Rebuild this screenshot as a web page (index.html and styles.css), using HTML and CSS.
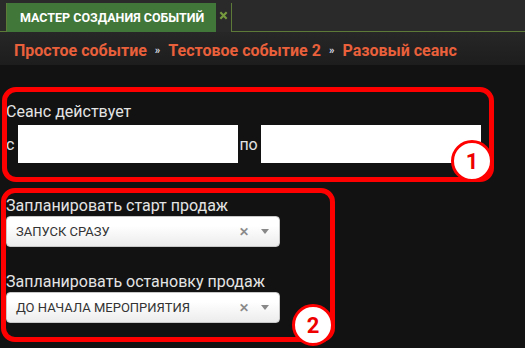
FILE: index.html
```html
<!DOCTYPE html>
<html lang="ru">
<head>
  <meta charset="UTF-8"/>
  <title>Мастер создания событий</title>
  <link rel="stylesheet" href="styles.css">
</head>
<body>
  <div class="tabbar">
    <div class="tab">Мастер создания событий</div>
    <div class="tab-close">
      <svg viewBox="0 0 10 10"><path d="M1.5 1.5l7 7M8.5 1.5l-7 7"/></svg>
    </div>
  </div>

  <div class="crumbs">
    <a href="#">Простое событие</a><span class="sep">»</span>
    <a href="#">Тестовое событие 2</a><span class="sep">»</span>
    <a href="#">Разовый сеанс</a>
  </div>

  <main class="wizard">
    <section class="group group-period">
      <div class="label">Сеанс действует</div>
      <div class="range">
        <span class="from">с</span>
        <input class="date" type="text"/>
        <span class="to">по</span>
        <input class="date" type="text"/>
      </div>
      <span class="mark">1</span>
    </section>

    <section class="group group-sales">
      <div class="label">Запланировать старт продаж</div>
      <div class="select">
        <span class="value">Запуск сразу</span>
        <span class="clear">✕</span><span class="arrow"></span>
      </div>
      <div class="label label-gap">Запланировать остановку продаж</div>
      <div class="select">
        <span class="value">До начала мероприятия</span>
        <span class="clear">✕</span><span class="arrow"></span>
      </div>
      <span class="mark">2</span>
    </section>
  </main>
</body>
</html>
```

FILE: styles.css
```css
/* ===== Global ===== */
*, *::before, *::after { margin:0; padding:0; box-sizing:border-box; }
body { font-family:Roboto,'Liberation Sans',sans-serif; background:#121212; color:#e2e2e2; width:525px; height:348px; overflow:hidden; }

/* ===== Tabs ===== */
.tabbar { height:32px; display:flex; align-items:flex-end; padding-left:6px; background:#2a2a2a; border-bottom:1px solid #5d7a38; }
.tab { height:29px; margin-bottom:-1px; padding:0 12px 0 13px; display:flex; align-items:center; background:#42773a; color:#fff; font-weight:700; font-size:12.5px; text-transform:uppercase; border-left:1px solid #5d7a38; }
.tab-close { width:16px; height:29px; margin-bottom:-1px; background:#2a2a2a; border-right:1px solid #5d7a38; display:flex; justify-content:center; padding-top:8px; }
.tab-close svg { width:9px; height:9px; stroke:#769a3e; stroke-width:2.4; }

/* ===== Breadcrumbs ===== */
.crumbs { height:33px; padding:9px 0 0 14px; background:linear-gradient(#272727,#1d1d1d); display:flex; align-items:flex-start; }
.crumbs a { color:#e9603b; font-weight:700; font-size:16px; text-decoration:none; line-height:20px; }
.crumbs .sep { color:#d8dde6; font-size:11px; font-weight:700; margin:0 8px; line-height:20px; }

/* ===== Wizard ===== */
.wizard { padding-left:6px; }
.group { position:relative; }
.group::before { content:""; position:absolute; border:5px solid #ff0000; border-radius:14px; pointer-events:none; }
.group-period { margin-top:37px; }
.group-period::before { left:-4px; top:-15px; width:492px; height:95px; }
.group-sales { margin-top:33px; }
.group-sales::before { left:-5px; top:-8px; width:334px; height:154px; }

.label { font-size:16px; line-height:20px; color:#e4e4e4; }
.label-gap { margin-top:25px; }

.range { display:flex; align-items:center; margin-top:3px; font-size:16px; }
.range .from { margin-right:4px; }
.range .to { margin:0 3px 0 1px; }
.date { width:220px; height:38px; border:none; background:#fff; outline:none; }

.select { width:274px; height:31px; display:flex; align-items:center; padding:0 10px 0 9px; background:linear-gradient(#fff 30%,#ececec); border:1px solid #c8c8c8; border-radius:4px; color:#333; font-size:13px; text-transform:uppercase; }
.select .value { flex:1; }
.select .clear { color:#8a8a8a; font-size:12px; font-weight:700; }
.select .arrow { margin-left:12px; border-left:4px solid transparent; border-right:4px solid transparent; border-top:5px solid #888; }

/* ===== Annotation marks ===== */
.mark { position:absolute; width:42px; height:42px; border-radius:50%; background:#fff; border:3px solid #ff0000; color:#ee0000; font-weight:700; font-size:22px; display:flex; align-items:center; justify-content:center; }
.group-period .mark { left:445px; top:38px; }
.group-sales .mark { left:286px; top:108px; }
```
